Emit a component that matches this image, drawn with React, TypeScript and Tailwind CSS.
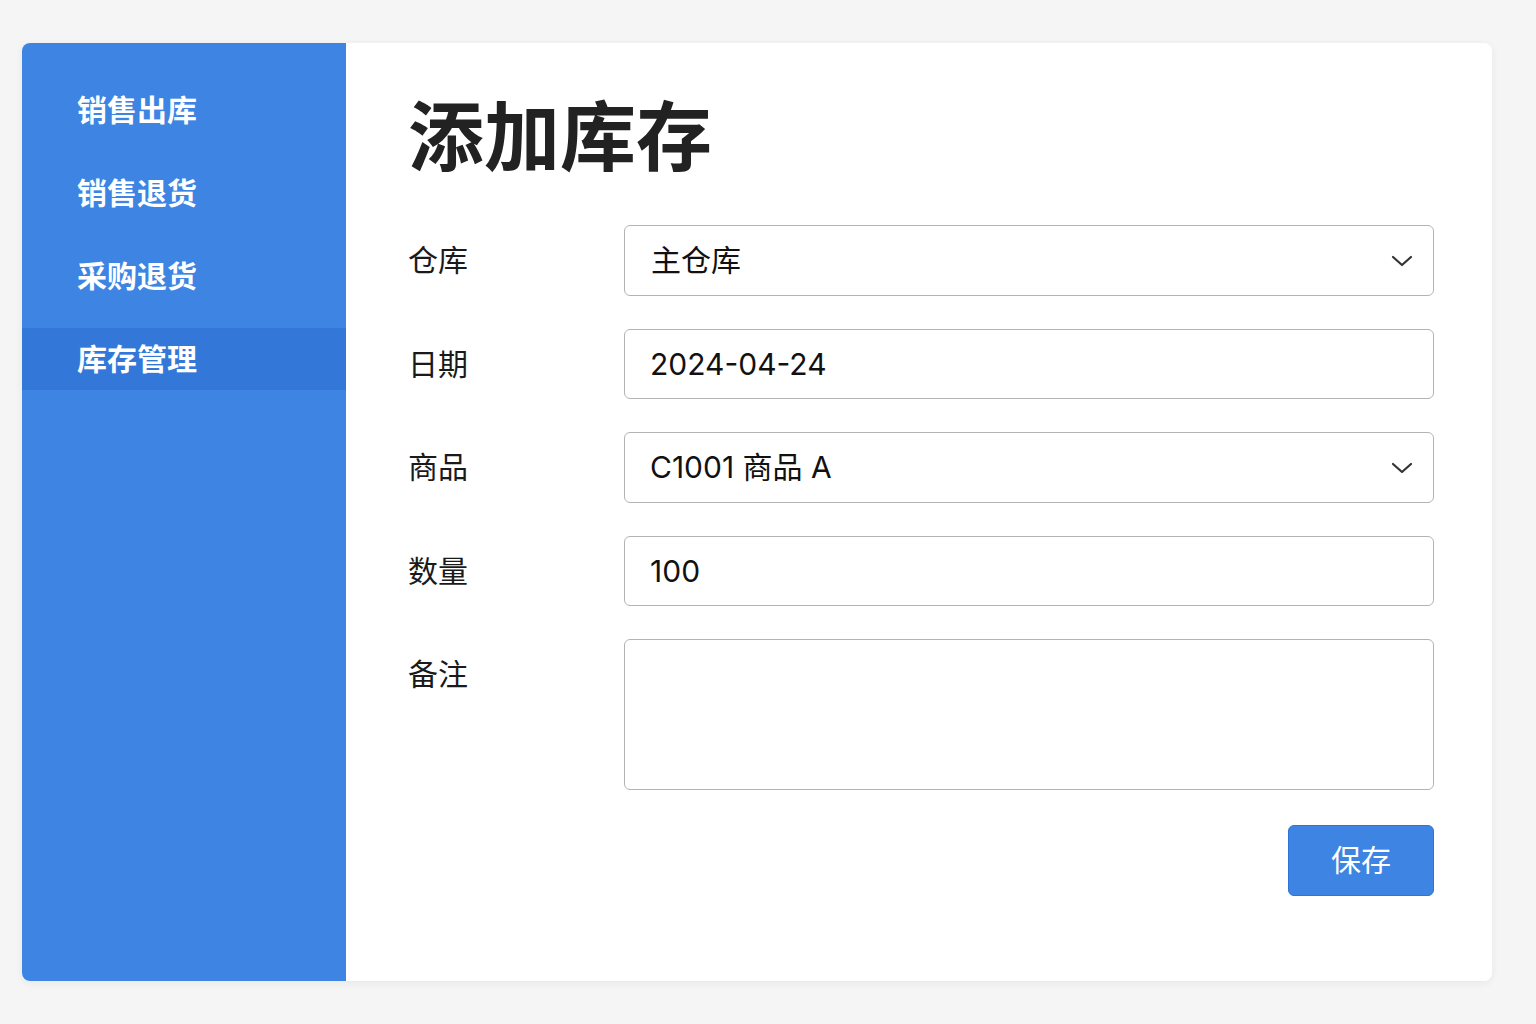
import React from "react";

const font = { fontFamily: '"Inter", "Noto Sans CJK SC", sans-serif' };

function Chevron() {
  return (
    <svg width="22" height="14" viewBox="0 0 22 14" fill="none" className="absolute right-[20px] top-1/2 -translate-y-1/2">
      <path d="M2 3 L11 11 L20 3" stroke="#333" strokeWidth="2.2" strokeLinecap="round" strokeLinejoin="round" />
    </svg>
  );
}

function Row({ label, children, top = false }: { label: string; children: React.ReactNode; top?: boolean }) {
  return (
    <div className={`flex ${top ? "items-start" : "items-center"}`}>
      <div className="w-[216px] shrink-0 h-[70px] flex items-center text-[30px] text-[#1a1a1a]">{label}</div>
      <div className="flex-1">{children}</div>
    </div>
  );
}

export default function App() {
  const nav = ["销售出库", "销售退货", "采购退货", "库存管理"];
  return (
    <div className="min-h-screen w-full bg-[#f5f5f5] pt-[43px] pl-[22px]" style={font}>
      <div className="w-[1470px] h-[938px] bg-white rounded-[8px] shadow-[0_2px_8px_rgba(0,0,0,0.06)] flex overflow-hidden">
        <div className="w-[324px] shrink-0 bg-[#3d84e3] pt-[36px] flex flex-col gap-[21px]">
          {nav.map((n, i) => (
            <div
              key={n}
              className={`h-[62px] flex items-center pl-[55px] text-[30px] font-bold text-white ${i === 3 ? "bg-[#3378d9]" : ""}`}
            >
              {n}
            </div>
          ))}
        </div>
        <div className="flex-1 pl-[62px] pr-[58px] pt-[56px]">
          <h1 className="text-[76px] leading-[76px] font-bold text-[#222] mb-[50px]">添加库存</h1>
          <div className="flex flex-col gap-[33px]">
            <Row label="仓库">
              <div className="relative h-[71px] border border-[#b3b3b3] rounded-[6px] flex items-center pl-[26px] text-[30px] text-[#111]">
                主仓库
                <Chevron />
              </div>
            </Row>
            <Row label="日期">
              <div className="h-[70px] border border-[#b3b3b3] rounded-[6px] flex items-center pl-[25px] text-[30px] text-[#111]">
                2024-04-24
              </div>
            </Row>
            <Row label="商品">
              <div className="relative h-[71px] border border-[#b3b3b3] rounded-[6px] flex items-center pl-[25px] text-[30px] text-[#111]">
                C1001 商品 A
                <Chevron />
              </div>
            </Row>
            <Row label="数量">
              <div className="h-[70px] border border-[#b3b3b3] rounded-[6px] flex items-center pl-[25px] text-[30px] text-[#111]">
                100
              </div>
            </Row>
            <Row label="备注" top>
              <div className="h-[151px] border border-[#b3b3b3] rounded-[6px]" />
            </Row>
          </div>
          <div className="flex justify-end mt-[35px]">
            <button className="w-[146px] h-[71px] bg-[#3d84e3] border border-[#2f74d6] rounded-[6px] text-white text-[30px]">
              保存
            </button>
          </div>
        </div>
      </div>
    </div>
  );
}
